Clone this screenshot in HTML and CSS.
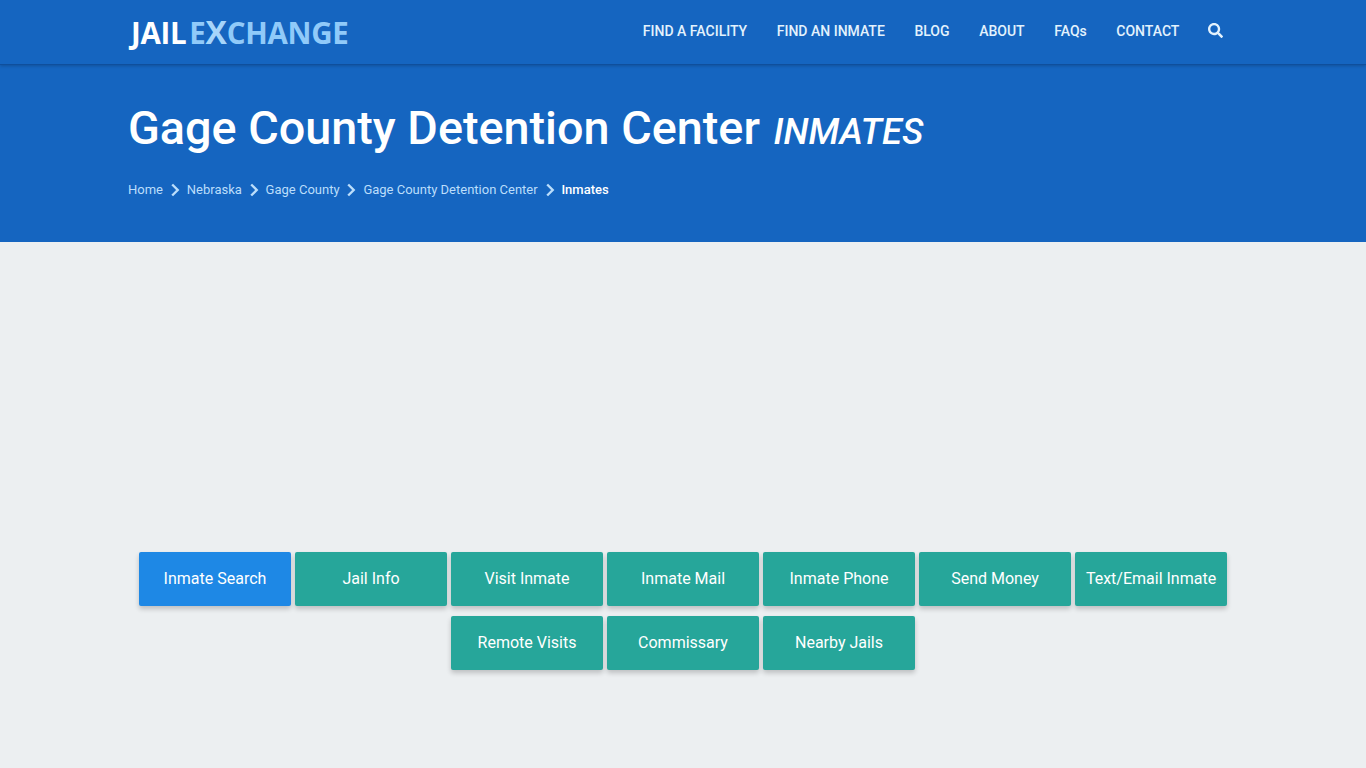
FILE: index.html
```html
<!DOCTYPE html>
<html lang="en">
<head>
  <meta charset="UTF-8" />
  <title>Gage County Detention Center Inmates</title>
  <link rel="stylesheet" href="styles.css">
</head>
<body>
  <nav class="navbar">
    <div class="wrap navbar-inner">
      <a class="logo" href="#"><span class="logo-jail">JAIL</span><span class="logo-exchange">E<span class="logo-x">X</span>CHANGE</span></a>
      <ul class="menu">
        <li><a href="#">FIND A FACILITY</a></li>
        <li><a href="#">FIND AN INMATE</a></li>
        <li><a href="#">BLOG</a></li>
        <li><a href="#">ABOUT</a></li>
        <li><a href="#">FAQs</a></li>
        <li><a href="#">CONTACT</a></li>
        <li class="menu-search">
          <a href="#" aria-label="Search">
            <svg class="search-icon" viewBox="0 0 512 512" width="15" height="15"><path fill="currentColor" d="M505 442.700L405.300 343c-4.500-4.500-10.600-7-17-7H372c27.600-35.300 44-79.700 44-128C416 93.100 322.900 0 208 0S0 93.100 0 208s93.100 208 208 208c48.300 0 92.700-16.400 128-44v16.300c0 6.400 2.500 12.500 7 17l99.700 99.700c9.400 9.400 24.600 9.400 33.900 0l28.300-28.300c9.400-9.400 9.400-24.600.1-34zM208 336c-70.700 0-128-57.200-128-128 0-70.700 57.200-128 128-128 70.700 0 128 57.200 128 128 0 70.700-57.200 128-128 128z"/></svg>
          </a>
        </li>
      </ul>
    </div>
  </nav>

  <header class="hero">
    <div class="wrap">
      <h1>Gage County Detention Center <small>INMATES</small></h1>
      <div class="crumbs">
        <a href="#">Home</a>
        <svg class="chev" viewBox="0 0 10 14" width="10" height="14"><path d="M2.200 1.500l5.500 5.500-5.500 5.500" fill="none" stroke="currentColor" stroke-width="2.400"/></svg>
        <a href="#">Nebraska</a>
        <svg class="chev" viewBox="0 0 10 14" width="10" height="14"><path d="M2.200 1.500l5.500 5.500-5.500 5.500" fill="none" stroke="currentColor" stroke-width="2.400"/></svg>
        <a href="#">Gage County</a>
        <svg class="chev" viewBox="0 0 10 14" width="10" height="14"><path d="M2.200 1.500l5.500 5.500-5.500 5.500" fill="none" stroke="currentColor" stroke-width="2.400"/></svg>
        <a href="#">Gage County Detention Center</a>
        <svg class="chev" viewBox="0 0 10 14" width="10" height="14"><path d="M2.200 1.500l5.500 5.500-5.500 5.500" fill="none" stroke="currentColor" stroke-width="2.400"/></svg>
        <span class="current">Inmates</span>
      </div>
    </div>
  </header>

  <main class="content">
    <div class="btn-row">
      <a class="btn active" href="#">Inmate Search</a>
      <a class="btn" href="#">Jail Info</a>
      <a class="btn" href="#">Visit Inmate</a>
      <a class="btn" href="#">Inmate Mail</a>
      <a class="btn" href="#">Inmate Phone</a>
      <a class="btn" href="#">Send Money</a>
      <a class="btn" href="#">Text/Email Inmate</a>
      <a class="btn" href="#">Remote Visits</a>
      <a class="btn" href="#">Commissary</a>
      <a class="btn" href="#">Nearby Jails</a>
    </div>
  </main>
</body>
</html>
```

FILE: styles.css
```css
* {
  box-sizing: border-box;
}
html, body {
  height: 100%;
}
body {
  margin: 0;
  background-color: #eceff1;
  font-family: Roboto, "Liberation Sans", sans-serif;
  color: #fff;
  overflow: hidden;
}
a {
  color: inherit;
  text-decoration: none;
}
.wrap {
  width: 1140px;
  margin: 0 auto;
  padding: 0 15px;
}
.navbar {
  height: 65px;
  background-color: #1565c0;
  border-bottom: 1px solid #0f4f9c;
  box-shadow: 0 1px 3px rgba(0, 0, 0, 0.2);
  position: relative;
}
.navbar-inner {
  display: flex;
  justify-content: space-between;
  align-items: center;
  height: 64px;
}
.logo {
  font-family: "Open Sans", sans-serif;
  font-size: 29.500px;
  font-weight: 700;
  letter-spacing: -0.3px;
  padding-left: 3px;
}
.logo-jail {
  color: #fff;
}
.logo-exchange {
  color: #90caf9;
  margin-left: 3px;
}
.logo-x {
  font-size: 32px;
  color: #a6d5fa;
  line-height: 1;
}
.menu {
  display: flex;
  align-items: center;
  gap: 29.600px;
  list-style: none;
  margin: -3px 0 0;
  padding: 0 15px 0 0;
  font-size: 14px;
  font-weight: 500;
  color: #e3f2fd;
}
.menu-search {
  margin-left: -1px;
}
.search-icon {
  display: block;
}
.hero {
  height: 177px;
  background-color: #1565c0;
  padding-top: 34px;
}
.hero h1 {
  margin: 0;
  font-size: 46.750px;
  line-height: 58px;
  font-weight: 500;
}
.hero h1 small {
  font-size: 36.250px;
  font-style: italic;
  margin-left: 2px;
}
.crumbs {
  display: flex;
  align-items: center;
  gap: 6.900px;
  margin-top: 21px;
  font-size: 13px;
  color: #bbdefb;
}
.current {
  color: #fff;
  font-weight: 500;
}
.content {
  padding-top: 310px;
}
.btn-row {
  display: flex;
  flex-wrap: wrap;
  justify-content: center;
  gap: 10px 4px;
  width: 1140px;
  margin: 0 auto;
}
.btn {
  width: 152px;
  height: 54px;
  padding-bottom: 2px;
  display: flex;
  align-items: center;
  justify-content: center;
  background-color: #26a69a;
  border-radius: 2px;
  font-size: 16px;
  color: #fff;
  white-space: nowrap;
  box-shadow: 0 3px 5px rgba(0, 0, 0, 0.2);
}
.btn.active {
  background-color: #1e88e5;
}
```
